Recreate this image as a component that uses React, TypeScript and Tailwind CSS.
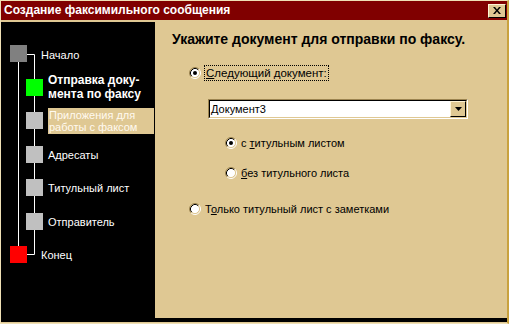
import React from "react";

const beige = "#dfc893";

function Radio({ checked = false }: { checked?: boolean }) {
  return (
    <svg width="12" height="12" viewBox="0 0 12 12" className="shrink-0">
      <circle cx="6" cy="6" r="4.5" fill="#ffffff" />
      <path d="M2.11 9.89 A5.5 5.5 0 0 1 9.89 2.11" fill="none" stroke="#9c8450" strokeWidth="1" />
      <path d="M9.89 2.11 A5.5 5.5 0 0 1 2.11 9.89" fill="none" stroke="#ffffff" strokeWidth="1" />
      <path d="M2.82 9.18 A4.5 4.5 0 0 1 9.18 2.82" fill="none" stroke="#000000" strokeWidth="1" />
      <path d="M9.18 2.82 A4.5 4.5 0 0 1 2.82 9.18" fill="none" stroke={beige} strokeWidth="1" />
      {checked && <circle cx="6" cy="6" r="2" fill="#000000" />}
    </svg>
  );
}

function Step({ color, big = false, children }: { color: string; big?: boolean; children: React.ReactNode }) {
  return (
    <div className={`flex h-[17px] items-center ${big ? "pl-[9px]" : "pl-[25px]"}`}>
      <div className="h-[17px] w-[17px] shrink-0" style={{ backgroundColor: color }} />
      <div className={`whitespace-nowrap ${big ? "ml-[14px]" : "ml-[5px]"}`}>{children}</div>
    </div>
  );
}

export default function App() {
  return (
    <div
      className="flex h-[324px] w-[509px] flex-col border-t border-l border-b border-r-2 border-t-[#efe0b5] border-l-[#efe0b5] border-b-[#efe0b5] border-r-[#c9a23e] bg-[#dfc893] text-[11px] leading-[13px]"
      style={{ fontFamily: '"Liberation Sans", Arial, sans-serif' }}
    >
      {/* title bar */}
      <div className="flex h-[19px] items-center justify-between bg-[#800000] pl-[3px] pr-[1px]">
        <span className="text-[12px] font-bold text-white">Создание факсимильного сообщения</span>
        <div className="flex h-[14px] w-[18px] items-center justify-center border border-t-[#fff4d6] border-l-[#fff4d6] border-r-black border-b-black bg-[#dfc893]">
          <svg width="8" height="7" viewBox="0 0 8 7">
            <path d="M0 0h2l2 2.5L6 0h2L5 3.5 8 7H6L4 4.5 2 7H0l3-3.5z" fill="#000" />
          </svg>
        </div>
      </div>

      <div className="mt-[2px] flex h-[296px]">
        {/* left wizard steps */}
        <div className="relative w-[154px] bg-black pt-[23px] text-white">
          <svg className="absolute left-0 top-0" width="154" height="296">
            <path d="M17.5 40V224" stroke="#fff" strokeWidth="1" />
            <path d="M26 32.5H33.5V232.5H26" fill="none" stroke="#fff" strokeWidth="1" />
          </svg>
          <div className="relative flex flex-col gap-[16.5px]">
            <Step color="#808080" big>
              <span className="relative top-[2px]">Начало</span>
            </Step>
            <Step color="#00ff00">
              <div className="text-[12px] font-bold leading-[14px]">
                Отправка доку-
                <br />
                мента по факсу
              </div>
            </Step>
            <Step color="#c0c0c0">
              <div className="w-[106px] bg-[#dfc893] pl-[1px] pt-[1px] pb-[1px] leading-[12px] text-[#fffaf0]">
                Приложения для
                <br />
                работы с факсом
              </div>
            </Step>
            <Step color="#c0c0c0">
              <span className="relative top-[1px]">Адресаты</span>
            </Step>
            <Step color="#c0c0c0">
              <span className="relative top-[1px]">Титульный лист</span>
            </Step>
            <Step color="#c0c0c0">
              <span className="relative top-[1px]">Отправитель</span>
            </Step>
            <Step color="#ff0000" big>
              <span className="relative top-[1px]">Конец</span>
            </Step>
          </div>
        </div>

        {/* right content */}
        <div className="flex flex-1 flex-col pt-[9px] pl-[17px] text-black">
          <div className="text-[14px] font-bold leading-[16px]">Укажите документ для отправки по факсу.</div>

          <div className="mt-[18px] ml-[17px] flex h-[16px] items-center">
            <Radio checked />
            <span className="ml-[3px] border border-dotted border-black px-[1px] text-[11.5px] leading-[14px]">
              <u>С</u>ледующий документ:
            </span>
          </div>

          <div className="mt-[18px] ml-[36px] flex h-[20px] w-[260px] border border-t-[#9c8450] border-l-[#9c8450] border-r-white border-b-white">
            <div className="flex flex-1 border border-t-black border-l-black border-r-[#dfc893] border-b-[#dfc893] bg-white">
              <div className="flex flex-1 items-center pl-[1px]">Документ3</div>
              <div className="flex w-[16px] items-center justify-center border border-t-[#fff4d6] border-l-[#fff4d6] border-r-black border-b-black bg-[#dfc893]">
                <svg width="7" height="4" viewBox="0 0 7 4">
                  <path d="M0 0h7L3.5 4z" fill="#000" />
                </svg>
              </div>
            </div>
          </div>

          <div className="mt-[16px] ml-[53px] flex h-[16px] items-center">
            <Radio checked />
            <span className="ml-[4px]">
              с <u>т</u>итульным листом
            </span>
          </div>

          <div className="mt-[14px] ml-[53px] flex h-[16px] items-center">
            <Radio />
            <span className="ml-[4px]">
              <u>б</u>ез титульного листа
            </span>
          </div>

          <div className="mt-[20px] ml-[17px] flex h-[16px] items-center">
            <Radio />
            <span className="ml-[4px]">
              Т<u>о</u>лько титульный лист с заметками
            </span>
          </div>
        </div>
      </div>

      <div className="h-[4px] bg-black" />
    </div>
  );
}
